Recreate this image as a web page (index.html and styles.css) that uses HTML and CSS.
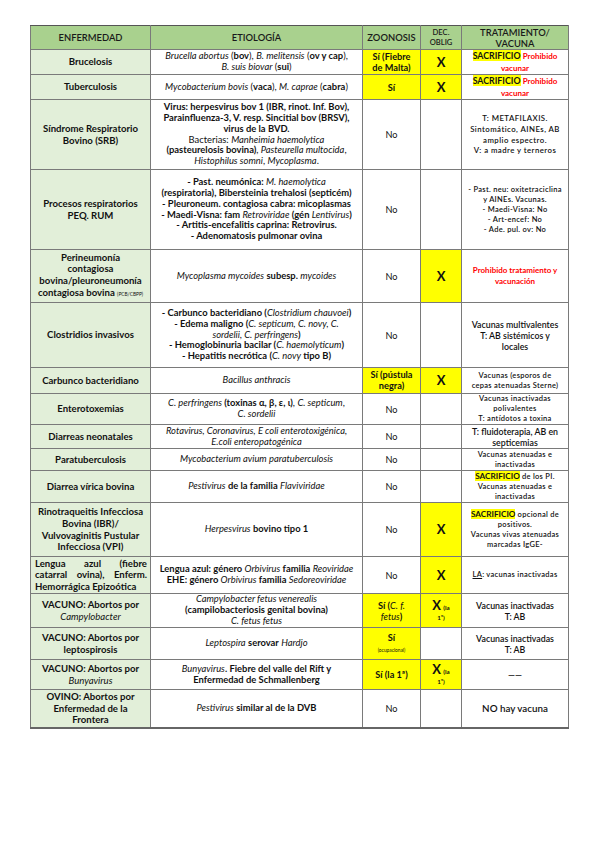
FILE: index.html
```html
<!DOCTYPE html>
<html lang="es">
<head>
<meta charset="utf-8">
<title>Enfermedades</title>
<link rel="stylesheet" href="styles.css">
</head>
<body>
<table class="tbl">
  <colgroup>
    <col class="w1"><col class="w2"><col class="w3"><col class="w4"><col class="w5">
  </colgroup>
  <tr class="hd">
    <th>ENFERMEDAD</th>
    <th>ETIOLOGÍA</th>
    <th>ZOONOSIS</th>
    <th class="hsm">DEC.<br>OBLIG</th>
    <th>TRATAMIENTO/<br>VACUNA</th>
  </tr>
  <tr class="r1">
    <td class="dis">Brucelosis</td>
    <td class="et"><i>Brucella abortus</i> (<b>bov</b>), <i>B. melitensis</i> (<b>ov y cap</b>),<br><i>B. suis biovar</i> (<b>sui</b>)</td>
    <td class="c y b">Sí (Fiebre<br>de Malta)</td>
    <td class="c y x">X</td>
    <td class="tr b"><span class="hl">SACRIFICIO</span> <span class="red sm">Prohibido</span><br><span class="red sm">vacunar</span></td>
  </tr>
  <tr class="r2">
    <td class="dis">Tuberculosis</td>
    <td class="et"><i>Mycobacterium bovis</i> (<b>vaca</b>), <i>M. caprae</i> (<b>cabra</b>)</td>
    <td class="c y b">Sí</td>
    <td class="c y x">X</td>
    <td class="tr b"><span class="hl">SACRIFICIO</span> <span class="red sm">Prohibido</span><br><span class="red sm">vacunar</span></td>
  </tr>
  <tr class="r3">
    <td class="dis">Síndrome Respiratorio<br>Bovino (SRB)</td>
    <td class="et"><b>Virus: herpesvirus bov 1 (IBR, rinot. Inf. Bov),<br>Parainfluenza-3, V. resp. Sincitial bov (BRSV),<br>virus de la BVD.</b><br>Bacterias: <i>Manheimia haemolytica</i><br><b>(pasteurelosis bovina)</b>, <i>Pasteurella multocida</i>,<br><i>Histophilus somni</i>, <i>Mycoplasma</i>.</td>
    <td class="c">No</td>
    <td class="c"></td>
    <td class="tr xs xsl">T: METAFILAXIS.<br>Sintomático, AINEs, AB<br>amplio espectro.<br>V: a madre y terneros</td>
  </tr>
  <tr class="r4">
    <td class="dis">Procesos respiratorios<br>PEQ. RUM</td>
    <td class="et b">- Past. neumónica: <i>M. haemolytica</i><br>(respiratoria), Bibersteinia trehalosi (septicém)<br>- Pleuroneum. contagiosa cabra: micoplasmas<br>- Maedi-Visna: fam <i>Retroviridae</i> (gén <i>Lentivirus</i>)<br>- Artitis-encefalitis caprina: Retrovirus.<br>- Adenomatosis pulmonar ovina</td>
    <td class="c">No</td>
    <td class="c"></td>
    <td class="tr xs">- Past. neu: oxitetraciclina<br>y AINEs. Vacunas.<br>- Maedi-Visna: No<br>- Art-encef: No<br>- Ade. pul. ov: No</td>
  </tr>
  <tr class="r5">
    <td class="dis">Perineumonía<br>contagiosa<br>bovina/pleuroneumonía<br>contagiosa bovina <span class="tiny">(PCB/CBPP)</span></td>
    <td class="et"><i>Mycoplasma mycoides</i> <b>subesp.</b> <i>mycoides</i></td>
    <td class="c">No</td>
    <td class="c y x">X</td>
    <td class="tr red sm">Prohibido tratamiento y<br>vacunación</td>
  </tr>
  <tr class="r6">
    <td class="dis">Clostridios invasivos</td>
    <td class="et b">- Carbunco bacteridiano (<i>Clostridium chauvoei</i>)<br>- Edema maligno (<i>C. septicum, C. novy, C.</i><br><i>sordelii, C. perfringens</i>)<br>- Hemoglobinuria bacilar (<i>C. haemolyticum</i>)<br>- Hepatitis necrótica (<i>C. novy</i> tipo B)</td>
    <td class="c">No</td>
    <td class="c"></td>
    <td class="tr b">Vacunas multivalentes<br>T: AB sistémicos y<br>locales</td>
  </tr>
  <tr class="r7">
    <td class="dis">Carbunco bacteridiano</td>
    <td class="et"><i>Bacillus anthracis</i></td>
    <td class="c y b lh">Sí (pústula<br>negra)</td>
    <td class="c y x">X</td>
    <td class="tr xs">Vacunas (esporos de<br>cepas atenuadas Sterne)</td>
  </tr>
  <tr class="r8">
    <td class="dis">Enterotoxemias</td>
    <td class="et"><b><i>C. perfringens</i> (toxinas α, β, ε, ι)</b>, <i>C. septicum</i>,<br><i>C. sordelii</i></td>
    <td class="c">No</td>
    <td class="c"></td>
    <td class="tr xs">Vacunas inactivadas<br>polivalentes<br>T: antídotos a toxina</td>
  </tr>
  <tr class="r9">
    <td class="dis">Diarreas neonatales</td>
    <td class="et"><i>Rotavirus, Coronavirus, E coli enterotoxigénica,</i><br><i>E.coli enteropatogénica</i></td>
    <td class="c">No</td>
    <td class="c"></td>
    <td class="tr b">T: fluidoterapia, AB en<br>septicemias</td>
  </tr>
  <tr class="r10">
    <td class="dis">Paratuberculosis</td>
    <td class="et"><i>Mycobacterium avium paratuberculosis</i></td>
    <td class="c">No</td>
    <td class="c"></td>
    <td class="tr xs">Vacunas atenuadas e<br>inactivadas</td>
  </tr>
  <tr class="r11">
    <td class="dis">Diarrea vírica bovina</td>
    <td class="et"><i>Pestivirus</i> <b>de la familia</b> <i>Flaviviridae</i></td>
    <td class="c">No</td>
    <td class="c"></td>
    <td class="tr xs"><span class="hl hls">SACRIFICIO</span> de los PI.<br>Vacunas atenuadas e<br>inactivadas</td>
  </tr>
  <tr class="r12">
    <td class="dis">Rinotraqueitis Infecciosa<br>Bovina (IBR)/<br>Vulvovaginitis Pustular<br>Infecciosa (VPI)</td>
    <td class="et"><i>Herpesvirus</i> <b>bovino tipo 1</b></td>
    <td class="c">No</td>
    <td class="c y x">X</td>
    <td class="tr xs"><span class="hl hls">SACRIFICIO</span> opcional de<br>positivos.<br>Vacunas vivas atenuadas<br>marcadas IgGE-</td>
  </tr>
  <tr class="r13">
    <td class="dis jl"><span class="jline">Lengua azul (fiebre</span><span class="jline">catarral ovina), Enferm.</span><span class="lline">Hemorrágica Epizoótica</span></td>
    <td class="et b">Lengua azul: género <i>Orbivirus</i> familia <i>Reoviridae</i><br>EHE: género <i>Orbivirus</i> familia <i>Sedoreoviridae</i></td>
    <td class="c">No</td>
    <td class="c y x">X</td>
    <td class="tr xs"><u>LA</u>: vacunas inactivadas</td>
  </tr>
  <tr class="r14">
    <td class="dis">VACUNO: Abortos por<br><i>Campylobacter</i></td>
    <td class="et"><i>Campylobacter fetus venerealis</i><br><b>(campilobacteriosis genital bovina)</b><br><i>C. fetus fetus</i></td>
    <td class="c y b">Sí (<i>C. f.</i><br><i>fetus</i>)</td>
    <td class="c y xl"><span class="x">X</span> <span class="tiny2">(la</span><br><span class="tiny2">1ª)</span></td>
    <td class="tr b">Vacunas inactivadas<br>T: AB</td>
  </tr>
  <tr class="r15">
    <td class="dis">VACUNO: Abortos por<br>leptospirosis</td>
    <td class="et"><i>Leptospira</i> <b>serovar</b> <i>Hardjo</i></td>
    <td class="c y b">Sí<br><span class="tiny">(ocupacional)</span></td>
    <td class="c"></td>
    <td class="tr b">Vacunas inactivadas<br>T: AB</td>
  </tr>
  <tr class="r16">
    <td class="dis">VACUNO: Abortos por<br><i>Bunyavirus</i></td>
    <td class="et b"><i>Bunyavirus</i>. Fiebre del valle del Rift y<br>Enfermedad de Schmallenberg</td>
    <td class="c y b">Sí (la 1ª)</td>
    <td class="c y xl"><span class="x">X</span> <span class="tiny2">(la</span><br><span class="tiny2">1ª)</span></td>
    <td class="tr b">——</td>
  </tr>
  <tr class="r17">
    <td class="dis">OVINO: Abortos por<br>Enfermedad de la<br>Frontera</td>
    <td class="et"><i>Pestivirus</i> <b>similar al de la DVB</b></td>
    <td class="c">No</td>
    <td class="c"></td>
    <td class="tr b big">NO hay vacuna</td>
  </tr>
</table>
</body>
</html>
```
FILE: styles.css
```css
html, body {
  margin: 0;
  padding: 0;
  background: #ffffff;
}
body {
  padding: 25px 0 0 30px;
  font-family: Lato, "Liberation Sans", sans-serif;
  color: #111;
}
.tbl {
  border-collapse: collapse;
  table-layout: fixed;
  width: 538px;
  font-size: 9.2px;
  line-height: 11px;
}
.w1 { width: 120px; }
.w2 { width: 212px; }
.w3 { width: 58px; }
.w4 { width: 41px; }
.w5 { width: 107px; }
.tbl th, .tbl td {
  border: 1px solid #7a7a7a;
  padding: 0 2px;
  text-align: center;
  vertical-align: middle;
  overflow: hidden;
}
.tbl tr:first-child th { border-top: 1px solid #555; }
.tbl tr:last-child td { border-bottom: 2px solid #666; }
.tbl th {
  background: #a9d18e;
  font-weight: 600;
  font-size: 9.4px;
  line-height: 11px;
  color: #1a1a1a;
  height: 23px;
}
.tbl th.hsm { font-size: 7.6px; line-height: 9.5px; }
.dis {
  background: #e2efd9;
  font-weight: 700;
  font-size: 9.6px;
  line-height: 11.6px;
}
.jl { padding: 0 3px 0 4px !important; }
.jline, .lline { display: block; }
.jline { text-align: justify; text-align-last: justify; }
.lline { text-align: left; }
.et { font-size: 9.4px; line-height: 10.9px; }
.et b { font-weight: 700; }
.b { font-weight: 700; }
.et i, .dis i { font-weight: 400; }
.b i { font-weight: 400; }
.y { background: #ffff00; }
.x { font-weight: 700; font-size: 13px; line-height: 13px; }
.xl { line-height: 9px; }
.lh { line-height: 10.5px; }
.sm { font-size: 8px; }
.xs { font-size: 7.5px; line-height: 10px; font-weight: 600; letter-spacing: 0.3px; }
.xsl { font-size: 7.8px; letter-spacing: 0.45px; line-height: 10.6px; }
.tiny { font-size: 4.8px; font-weight: 400; }
.tiny2 { font-size: 6.2px; font-weight: 700; line-height: 9px; }
.red { color: #ff0000; font-weight: 700; }
.hl { background: #ffff00; font-weight: 700; }
.hls { font-size: 8.2px; letter-spacing: 0; }
.tr.b { font-size: 8.8px; font-weight: 600; }
.tr.big { font-size: 9.8px; }
.r1 td { height: 24px; }
.r2 td { height: 20px; }
.r3 td { height: 69px; }
.r4 td { height: 79px; }
.r5 td { height: 52px; }
.r6 td { height: 64px; }
.r7 td { height: 25px; }
.r8 td { height: 30px; }
.r9 td { height: 23px; }
.r10 td { height: 21px; }
.r11 td { height: 31px; }
.r12 td { height: 53px; }
.r13 td { height: 36px; }
.r14 td { height: 33px; }
.r15 td { height: 31px; }
.r16 td { height: 29px; }
.r17 td { height: 37px; }
```
